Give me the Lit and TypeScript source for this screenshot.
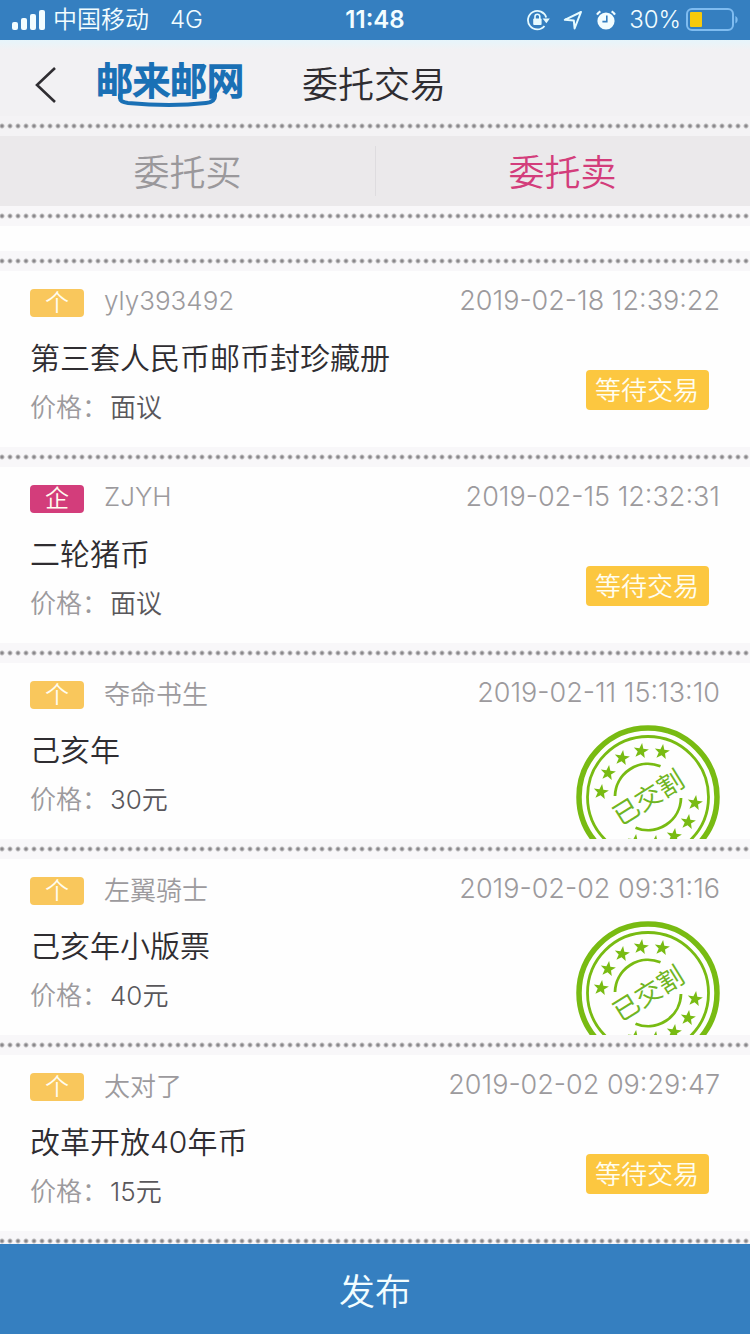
import { LitElement, html, css, svg } from "lit";
import { customElement, property, state } from "lit/decorators.js";
import { classMap } from "lit/directives/class-map.js";

interface Order {
  kind: "个" | "企";
  user: string;
  time: string;
  title: string;
  price: string;
  done: boolean;
}

const ORDERS: Order[] = [
  { kind: "个", user: "yly393492", time: "2019-02-18 12:39:22", title: "第三套人民币邮币封珍藏册", price: "面议", done: false },
  { kind: "企", user: "ZJYH", time: "2019-02-15 12:32:31", title: "二轮猪币", price: "面议", done: false },
  { kind: "个", user: "夺命书生", time: "2019-02-11 15:13:10", title: "己亥年", price: "30元", done: true },
  { kind: "个", user: "左翼骑士", time: "2019-02-02 09:31:16", title: "己亥年小版票", price: "40元", done: true },
  { kind: "个", user: "太对了", time: "2019-02-02 09:29:47", title: "改革开放40年币", price: "15元", done: false },
];

const STAR = "M0-8L2-2.6 7.6-2.5 3.2 1 4.7 6.5 0 3.3-4.7 6.5-3.2 1-7.6-2.5-2-2.6Z";
const STAR_SPOTS = [
  [-47, -5], [-40, -24], [-26, -39], [-7, -46], [14, -45],
  [47, 6], [40, 25], [26, 39], [7, 46], [-13, 45],
];

@customElement("status-bar")
class StatusBar extends LitElement {
  static styles = css`
    :host {
      display: grid;
      grid-template-columns: 1fr auto 1fr;
      align-items: center;
      height: 40px;
      padding: 0 12px;
      background: #357fc0;
      color: #f2fdff;
      font-size: 24px;
      line-height: 40px;
    }
    svg { display: block; }
    .left, .right { display: flex; align-items: center; }
    .left { gap: 7px; }
    .net { margin-left: 14px; }
    .time { font-weight: 600; }
    .right { justify-content: flex-end; gap: 13px; }
    .power { display: flex; align-items: center; gap: 5px; }
  `;
  render() {
    return html`
      <div class="left">
        <svg width="34" height="22" viewBox="0 0 34 22" fill="#f2fdff" aria-hidden="true">
          <rect x="0" y="13" width="6" height="8" rx="2" />
          <rect x="9" y="9" width="6" height="12" rx="2" />
          <rect x="18" y="5" width="6" height="16" rx="2" />
          <rect x="27" y="1" width="6" height="20" rx="2" />
        </svg>
        <span>中国移动</span><span class="net">4G</span>
      </div>
      <div class="time">11:48</div>
      <div class="right">
        <svg width="23" height="22" viewBox="0 0 23 22" fill="none" stroke="#e6fbff" stroke-width="1.8" aria-hidden="true">
          <path d="M19.200 8.500A9.300 9.300 0 1 0 17.500 17" />
          <path d="M15.600 9.400h7.200l-3.400 4.800z" fill="#e6fbff" stroke="none" />
          <rect x="6.200" y="9.600" width="8.400" height="6.400" rx="1" fill="#e6fbff" stroke="none" />
          <path d="M8 10V7.600a2.400 2.400 0 0 1 4.800 0V10" stroke-width="1.600" />
        </svg>
        <svg width="20" height="20" viewBox="0 0 20 20" fill="none" stroke="#e6fbff" stroke-width="2" stroke-linejoin="round" aria-hidden="true">
          <path d="M18 2L1.800 9.800l9 .6.8 8z" />
        </svg>
        <svg width="20" height="20" viewBox="0 0 20 20" aria-hidden="true">
          <circle cx="10" cy="11" r="8.600" fill="#f2fdff" />
          <path d="M1 4.600A11 11 0 0 1 4.400 1.400M15.600 1.400A11 11 0 0 1 19 4.600" stroke="#f2fdff" stroke-width="2.200" fill="none" />
          <path d="M10.800 5.600v6H6.400" stroke="#357fc0" stroke-width="1.600" fill="none" />
        </svg>
        <div class="power">
          <span>30%</span>
          <svg width="52" height="24" viewBox="0 0 52 24" aria-hidden="true">
            <rect x="1" y="1" width="46" height="21" rx="5" fill="none" stroke="#7fbcf0" stroke-width="2" />
            <rect x="4" y="4" width="12" height="15" rx="1" fill="#f7ca0c" />
            <path d="M49.400 8c3 1.400 3 6 0 7.400z" fill="#7fbcf0" />
          </svg>
        </div>
      </div>
    `;
  }
}

@customElement("done-stamp")
class DoneStamp extends LitElement {
  static styles = css`
    :host { display: block; }
    svg { display: block; }
    .word {
      font-family: "Noto Sans CJK SC", sans-serif;
      font-size: 26px;
      font-weight: 400;
      fill: #6fb522;
    }
  `;
  render() {
    return html`
      <svg width="144" height="114" viewBox="0 0 144 114" role="img" aria-label="已交割">
        <g transform="translate(72 72)" fill="none" stroke="#78bb12">
          <circle r="69" stroke-width="5.500" />
          <circle r="60.500" stroke-width="2.800" />
          <path d="M-33-1A33 33 0 0 1 12.500-30.700M33 1A33 33 0 0 1-12.500 30.700" stroke-width="2.800" />
          <g fill="#78bb12" stroke="none">
            ${STAR_SPOTS.map(([x, y]) => svg`<path d=${STAR} transform="translate(${x} ${y}) rotate(8)" />`)}
          </g>
          <text class="word" stroke="none" text-anchor="middle" y="10" transform="rotate(-32)">已交割</text>
        </g>
      </svg>
    `;
  }
}

@customElement("order-row")
class OrderRow extends LitElement {
  @property({ attribute: false }) order!: Order;

  static styles = css`
    :host { display: block; padding: 0 30px; background: #fefefe; }
    .head {
      display: flex;
      align-items: center;
      box-sizing: border-box;
      height: 62px;
      padding-bottom: 4px;
      font-size: 26px;
      color: #9c9a9d;
    }
    .tag {
      width: 54px;
      height: 28px;
      margin: 6px 20px 0 0;
      border-radius: 4px;
      background: #f9c75c;
      color: #fffdf0;
      font-size: 24px;
      line-height: 28px;
      text-align: center;
    }
    .tag.firm { background: #d33d7b; }
    .user { flex: 1; }
    time { font-size: 27px; }
    .body { display: flex; align-items: center; justify-content: space-between; height: 114px; }
    .info { align-self: flex-start; }
    .title { margin: 0; font-size: 30px; font-weight: inherit; line-height: 50px; color: #2f2d31; }
    .price { display: flex; margin: 0; font-size: 26px; line-height: 50px; color: #59575b; }
    .label { width: 80px; color: #9c9a9d; }
    .wait {
      margin-right: 11px;
      padding: 2px 10px 0 9px;
      border-radius: 4px;
      background: #fcc740;
      color: #fffdf0;
      font-size: 26px;
      line-height: 38px;
    }
  `;
  render() {
    const o = this.order;
    return html`
      <div class="head">
        <span class=${classMap({ tag: true, firm: o.kind === "企" })}>${o.kind}</span>
        <span class="user">${o.user}</span>
        <time>${o.time}</time>
      </div>
      <div class="body">
        <div class="info">
          <h2 class="title">${o.title}</h2>
          <p class="price"><span class="label">价格：</span><span>${o.price}</span></p>
        </div>
        ${o.done ? html`<done-stamp></done-stamp>` : html`<span class="wait">等待交易</span>`}
      </div>
    `;
  }
}

@customElement("app-root")
class AppRoot extends LitElement {
  @state() private tab = 1;

  static styles = css`
    :host {
      display: flex;
      flex-direction: column;
      height: 100vh;
      overflow: hidden;
      background: #fefefe;
      font-family: Inter, "Noto Sans CJK SC", sans-serif;
      font-weight: 350;
    }
    button { border: 0; padding: 0; background: none; font: inherit; cursor: pointer; }
    svg { display: block; }
    status-bar, .bar, .tabs, .publish, .dots { flex: none; }
    .bar {
      display: flex;
      align-items: center;
      height: 76px;
      padding: 14px 34px 0;
      box-sizing: border-box;
      background: linear-gradient(#e6f5fb, #f2f1f3 10px);
    }
    .logo { display: grid; margin: 0 58px 0 38px; color: #1a70b5; text-decoration: none; }
    .brand, .swoosh { grid-area: 1 / 1; }
    .brand { font-size: 37px; font-weight: 400; line-height: 42px; -webkit-text-stroke: 2px #1a70b5; }
    .heading { margin: 0; font-size: 36px; font-weight: inherit; line-height: 50px; color: #2f2d31; }
    .dots {
      height: 20px;
      background: radial-gradient(circle, #8a888b 1px, #8a888b00 3px) -2px center / 8px 8px repeat-x, #f8f7f9;
    }
    .dots.top { background-color: #f4f3f5; }
    .tabs { display: grid; grid-template-columns: 1fr 1fr; background: #ebe9eb; }
    .tab { padding-top: 4px; font-size: 36px; line-height: 66px; color: #9a989b; }
    .tab + .tab { background: linear-gradient(#dedcdf, #dedcdf) left center / 1px 50px no-repeat; }
    .tab.on { color: #d33d7b; }
    .list { flex: 1; min-height: 0; padding-top: 25px; overflow: hidden; }
    .publish { height: 90px; background: #357fc0; color: #f2fdff; font-size: 36px; }
  `;
  render() {
    return html`
      <status-bar></status-bar>
      <header class="bar">
        <button class="back" aria-label="返回">
          <svg width="24" height="36" viewBox="0 0 24 36" fill="none" stroke="#2f2d31" stroke-width="2.600">
            <path d="M21 1L3 18l18 17" />
          </svg>
        </button>
        <a class="logo" href="#">
          <span class="brand">邮来邮网</span>
          <svg class="swoosh" width="148" height="48" viewBox="0 0 148 48" fill="none" stroke="#1a70b5" stroke-width="4" stroke-linecap="round" aria-hidden="true">
            <path d="M24 34v3q0 4 8 5 43 4 78 0 9-1 9-7v-2" />
          </svg>
        </a>
        <h1 class="heading">委托交易</h1>
      </header>
      <div class="dots top"></div>
      <nav class="tabs" role="tablist">
        ${["委托买", "委托卖"].map(
          (name, i) => html`<button
            role="tab"
            aria-selected=${this.tab === i}
            class=${classMap({ tab: true, on: this.tab === i })}
            @click=${() => (this.tab = i)}
          >${name}</button>`,
        )}
      </nav>
      <div class="dots"></div>
      <main class="list">
        <div class="dots"></div>
        ${ORDERS.map((o) => html`<order-row .order=${o}></order-row><div class="dots"></div>`)}
      </main>
      <button class="publish">发布</button>
    `;
  }
}
